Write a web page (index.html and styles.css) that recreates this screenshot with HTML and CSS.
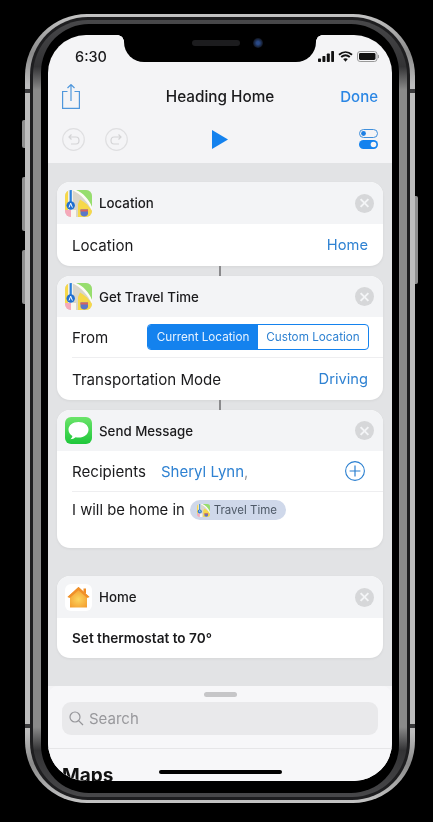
FILE: index.html
```html
<!DOCTYPE html>
<html lang="en">

<head>
    <meta charset="UTF-8">
    <meta name="viewport" content="width=device-width, initial-scale=1.0">
    <title>Heading Home</title>
    <link rel="stylesheet" href="styles.css">
</head>

<body>
    <svg class="defs" width="0" height="0">
        <defs>
            <linearGradient id="msgGreen" x1="0" y1="0" x2="0" y2="1">
                <stop offset="0" stop-color="#6be46a" />
                <stop offset="1" stop-color="#1ec73a" />
            </linearGradient>
            <radialGradient id="houseOrange" cx=".5" cy=".6" r=".55">
                <stop offset="0" stop-color="#fcd55e" />
                <stop offset="1" stop-color="#f39a2c" />
            </radialGradient>
            <clipPath id="mapClip">
                <rect width="27" height="27" rx="6" />
            </clipPath>
            <symbol id="mapIcon" viewBox="0 0 27 27">
                <g clip-path="url(#mapClip)">
                    <rect width="27" height="27" fill="#d9d6ca" />
                    <path d="M10 0H27V18C24 10 18 3 10 0Z" fill="#97de6e" />
                    <path d="M7 0H11C18 3 24 9 27 17V21C23 12 16 4 7 0Z" fill="#fdfcf6" />
                    <path d="M13 27V14L15 9.500C20 12 24 16 27 21V27Z" fill="#f6d84a" />
                    <rect width="3" height="20" fill="#f6d84a" />
                    <rect x="3" width="5" height="20" fill="#f4f1e6" />
                    <rect x="0" y="20" width="6" height="7" fill="#f5a9ba" />
                    <rect x="6" y="20" width="5" height="7" fill="#f8f6ef" />
                    <rect x="4.600" width="2.200" height="13" fill="#2a7fdc" />
                    <circle cx="5.700" cy="15.500" r="4.200" fill="#1f6fd0" />
                    <path d="M4 17.500 5.700 13.200 7.400 17.500" fill="none" stroke="#fff" stroke-width="1" />
                    <path d="M15.500 19.500H23V23.500C23 25.500 21 26.500 19.200 26.500 17.400 26.500 15.500 25.500 15.500 23.500Z" fill="#5b78c8" />
                    <rect x="15.500" y="19.500" width="7.500" height="2" fill="#d8625f" />
                </g>
            </symbol>
        </defs>
    </svg>

    <div class="phone">
        <span class="side-btn mute"></span>
        <span class="side-btn vol-up"></span>
        <span class="side-btn vol-down"></span>
        <span class="side-btn power"></span>
        <span class="band band-tl"></span>
        <span class="band band-tr"></span>
        <span class="band band-bl"></span>
        <span class="band band-br"></span>

        <div class="rim">
            <div class="ring">
                <div class="bezel">
                    <div class="screen">
                        <div class="notch">
                            <span class="speaker"></span>
                            <span class="camera"></span>
                        </div>

                        <header class="top">
                            <div class="status">
                                <span class="time">6:30</span>
                                <div class="status-icons">
                                    <svg width="16" height="11" viewBox="0 0 16 11">
                                        <rect x="0" y="7.500" width="3" height="3.500" rx=".7" fill="#111" />
                                        <rect x="4.400" y="5" width="3" height="6" rx=".7" fill="#111" />
                                        <rect x="8.800" y="2.500" width="3" height="8.500" rx=".7" fill="#111" />
                                        <rect x="13.200" y="0" width="2.800" height="11" rx=".7" fill="#111" />
                                    </svg>
                                    <svg width="15" height="11" viewBox="0 0 15 11">
                                        <path d="M1 3.800C5 .2 10 .2 14 3.800M3.200 6C5.800 3.800 9.200 3.800 11.800 6" fill="none" stroke="#111" stroke-width="1.900" />
                                        <path d="M5.200 8 7.500 10.800 9.800 8C8.400 6.900 6.600 6.900 5.200 8Z" fill="#111" />
                                    </svg>
                                    <svg width="22" height="11" viewBox="0 0 22 11">
                                        <rect x=".5" y=".5" width="19.500" height="10" rx="2.600" fill="none" stroke="#999" />
                                        <rect x="2" y="2" width="16.500" height="7" rx="1.400" fill="#111" />
                                        <rect x="20.800" y="3.800" width="1.200" height="3.400" rx=".6" fill="#999" />
                                    </svg>
                                </div>
                            </div>

                            <nav class="navbar">
                                <svg class="share" width="18" height="25" viewBox="0 0 18 25">
                                    <path d="M5.500 7.500H.6V24.400H17.400V7.500H12.500" fill="none" stroke="#4f97dc" stroke-width="1.200" />
                                    <path d="M9 17V.8M5.500 4 9 .6 12.500 4" fill="none" stroke="#4f97dc" stroke-width="1.200" />
                                </svg>
                                <h1 class="title">Heading Home</h1>
                                <span class="done">Done</span>
                            </nav>

                            <div class="toolbar">
                                <div class="history">
                                    <svg width="23" height="23" viewBox="0 0 23 23">
                                        <circle cx="11.500" cy="11.500" r="10.800" fill="none" stroke="#dfdfe1" stroke-width="1.200" />
                                        <path d="M7 9H14C18 9 18 16 14 16H9M9.500 6.500 7 9 9.500 11.500" fill="none" stroke="#d4d4d6" stroke-width="1.200" />
                                    </svg>
                                    <svg width="23" height="23" viewBox="0 0 23 23">
                                        <circle cx="11.500" cy="11.500" r="10.800" fill="none" stroke="#dfdfe1" stroke-width="1.200" />
                                        <path d="M16 9H9C5 9 5 16 9 16H14M13.500 6.500 16 9 13.500 11.500" fill="none" stroke="#d4d4d6" stroke-width="1.200" />
                                    </svg>
                                </div>
                                <svg class="play" width="16" height="19" viewBox="0 0 16 19">
                                    <path d="M0 0 16 9.500 0 19Z" fill="#1482ee" />
                                </svg>
                                <svg class="toggles" width="19" height="20" viewBox="0 0 19 20">
                                    <rect x=".5" y=".5" width="18" height="8" rx="4" fill="#f4f4f6" stroke="#3f8fdc" />
                                    <circle cx="4.500" cy="4.500" r="2.400" fill="#1c7fe4" />
                                    <rect y="11" width="19" height="9" rx="4.500" fill="#1482ee" />
                                    <circle cx="14.500" cy="15.500" r="2.800" fill="#f4f4f6" />
                                </svg>
                            </div>
                        </header>

                        <main class="canvas">
                            <section class="card">
                                <div class="card-head">
                                    <svg class="app-icon" width="27" height="27"><use href="#mapIcon" /></svg>
                                    <span class="card-title">Location</span>
                                    <span class="close"></span>
                                </div>
                                <div class="row">
                                    <span class="label">Location</span>
                                    <span class="value">Home</span>
                                </div>
                            </section>
                            <div class="link"></div>

                            <section class="card">
                                <div class="card-head head-short">
                                    <svg class="app-icon" width="27" height="27"><use href="#mapIcon" /></svg>
                                    <span class="card-title">Get Travel Time</span>
                                    <span class="close"></span>
                                </div>
                                <div class="row row-line row-from">
                                    <span class="label">From</span>
                                    <div class="segment">
                                        <span class="seg seg-on">Current Location</span>
                                        <span class="seg">Custom Location</span>
                                    </div>
                                </div>
                                <div class="row">
                                    <span class="label">Transportation Mode</span>
                                    <span class="value">Driving</span>
                                </div>
                            </section>
                            <div class="link"></div>

                            <section class="card">
                                <div class="card-head head-short">
                                    <svg class="app-icon" width="27" height="27" viewBox="0 0 27 27">
                                        <rect width="27" height="27" rx="6" fill="url(#msgGreen)" />
                                        <path d="M13.500 5C7.700 5 3.500 8.300 3.500 12.700 3.500 15.300 5 17.500 7.400 18.900 7.200 20.200 6.400 21.300 5.400 22.200 7.400 22.100 9.200 21.400 10.600 20.200 11.500 20.400 12.500 20.500 13.500 20.500 19.300 20.500 23.500 17.100 23.500 12.700 23.500 8.300 19.300 5 13.500 5Z" fill="#fff" />
                                    </svg>
                                    <span class="card-title">Send Message</span>
                                    <span class="close"></span>
                                </div>
                                <div class="row row-line recipients">
                                    <span class="label">Recipients</span>
                                    <span class="value to">Sheryl Lynn<span class="comma">,</span></span>
                                    <svg class="add" width="20" height="20" viewBox="0 0 20 20">
                                        <circle cx="10" cy="10" r="9.400" fill="none" stroke="#2a7fd0" stroke-width="1.100" />
                                        <path d="M10 4.600V15.400M4.600 10H15.400" stroke="#2a7fd0" stroke-width="1.200" />
                                    </svg>
                                </div>
                                <div class="message">
                                    <span class="label">I will be home in</span>
                                    <span class="pill">
                                        <svg width="13" height="13"><use href="#mapIcon" /></svg>
                                        Travel Time
                                    </span>
                                </div>
                            </section>

                            <section class="card card-home">
                                <div class="card-head">
                                    <svg class="app-icon" width="27" height="27" viewBox="0 0 27 27">
                                        <rect width="27" height="27" rx="6" fill="#fff" />
                                        <rect x="18.500" y="4.500" width="2.500" height="5" fill="#f08c24" />
                                        <path d="M13.500 3 24.500 13 22 13.800V23.500H5V13.800L2.500 13Z" fill="url(#houseOrange)" />
                                        <path d="M13.500 3 24.500 13 22 13.800 13.500 6.200 5 13.800 2.500 13Z" fill="#f0902a" />
                                    </svg>
                                    <span class="card-title">Home</span>
                                    <span class="close"></span>
                                </div>
                                <div class="row row-setting">
                                    <span class="setting">Set thermostat to 70°</span>
                                </div>
                            </section>
                        </main>

                        <div class="sheet">
                            <span class="grabber"></span>
                            <div class="search">
                                <svg width="15" height="15" viewBox="0 0 15 15">
                                    <circle cx="6" cy="6" r="5" fill="none" stroke="#96969a" stroke-width="1.200" />
                                    <path d="M9.600 9.600 14 14" stroke="#96969a" stroke-width="1.300" />
                                </svg>
                                <span>Search</span>
                            </div>
                            <h2 class="sheet-title">Maps</h2>
                        </div>
                        <span class="home-bar"></span>
                    </div>
                </div>
            </div>
        </div>
    </div>
</body>

</html>
```

FILE: styles.css
```css
* {
    padding: 0;
    margin: 0;
    box-sizing: border-box;
}

body {
    width: 433px;
    height: 822px;
    overflow: hidden;
    background: #000;
    font-family: Inter, "Noto Sans", sans-serif;
    color: #1a1a1c;
}

.defs {
    position: absolute;
}

/* phone frame */
.phone {
    position: relative;
    width: 390px;
    height: 789px;
    margin: 14px 0 0 25px;
    padding: 3px 5px;
    border-radius: 62px;
    background: linear-gradient(#c4c4c4, #8a8a8a 5%, #bdbdbd 9%, #bdbdbd 91%, #8a8a8a 95%, #c4c4c4);
    filter: blur(.35px);
}

.rim {
    height: 100%;
    padding: 3px;
    border-radius: 58px;
    background: #1e1e20;
}

.ring {
    height: 100%;
    padding: 4px 8px;
    border-radius: 55px;
    background: linear-gradient(#48484a, #333335 6%, #8a8a8a 9%, #8a8a8a 91%, #333335 94%, #48484a);
}

.bezel {
    height: 100%;
    padding: 11px 7px 12px;
    border-radius: 48px;
    background: #000;
}

.side-btn {
    position: absolute;
    width: 3px;
    background: #8f8f8f;
    border-radius: 2px 0 0 2px;
}

.mute {
    left: -3px;
    top: 106px;
    height: 28px;
}

.vol-up {
    left: -3px;
    top: 163px;
    height: 54px;
}

.vol-down {
    left: -3px;
    top: 236px;
    height: 54px;
}

.power {
    right: -3px;
    top: 182px;
    height: 88px;
    border-radius: 0 2px 2px 0;
}

.band {
    position: absolute;
    z-index: 2;
    width: 5px;
    height: 4px;
    background: #3a3a3c;
}

.band-tl {
    left: 0;
    top: 75px;
}

.band-tr {
    right: 0;
    top: 75px;
}

.band-bl {
    left: 0;
    top: 710px;
}

.band-br {
    right: 0;
    top: 710px;
}

.screen {
    position: relative;
    display: flex;
    flex-direction: column;
    height: 100%;
    overflow: hidden;
    border-radius: 38px;
    background: #f4f4f6;
}

.notch {
    position: absolute;
    left: 76px;
    top: 0;
    z-index: 3;
    display: flex;
    align-items: center;
    justify-content: center;
    gap: 13px;
    width: 192px;
    height: 27px;
    padding: 0 0 12px 14px;
    background: #000;
    border-radius: 0 0 20px 20px;
}

/* little flares where the notch meets the top edge */
.notch::before,
.notch::after {
    content: "";
    position: absolute;
    top: 0;
    width: 6px;
    height: 6px;
}

.notch::before {
    left: -6px;
    background: radial-gradient(circle at 0 100%, transparent 5.500px, #000 6px);
}

.notch::after {
    right: -6px;
    background: radial-gradient(circle at 100% 100%, transparent 5.500px, #000 6px);
}

.speaker {
    width: 48px;
    height: 6px;
    border-radius: 3px;
    background: #1c1c1e;
}

.camera {
    width: 10px;
    height: 10px;
    border-radius: 50%;
    background: radial-gradient(#2a4a88 20%, #10141e 70%);
}

/* header */
.top {
    flex: none;
    height: 128px;
}

.status {
    display: flex;
    align-items: center;
    justify-content: space-between;
    height: 42px;
    padding: 0 13px 0 27px;
}

.time {
    font-size: 14.500px;
    font-weight: 500;
}

.status-icons {
    display: flex;
    align-items: center;
    gap: 4px;
}

.navbar {
    display: grid;
    grid-template-columns: 1fr auto 1fr;
    align-items: center;
    height: 38px;
    padding: 0 14px;
}

.title {
    font-size: 15.300px;
    font-weight: 500;
    color: #1a1a1c;
}

.done {
    justify-self: end;
    font-size: 15px;
    font-weight: 500;
    color: #2a86e4;
}

.toolbar {
    display: grid;
    grid-template-columns: 1fr auto 1fr;
    align-items: center;
    height: 48px;
    padding: 0 14px;
}

.history {
    display: flex;
    gap: 20px;
}

.play {
    margin-top: 1px;
}

.toggles {
    justify-self: end;
}

/* shortcut cards */
.canvas {
    flex: none;
    height: 523px;
    padding: 19px 9px 0;
    background: #e2e3e5;
}

.card {
    overflow: hidden;
    border-radius: 13px;
    background: #fff;
    box-shadow: 0 1px 3px rgba(0, 0, 0, .06);
}

.card-home {
    margin-top: 28px;
}

.card-head {
    display: flex;
    align-items: center;
    height: 42px;
    padding: 0 9px 0 8px;
    background: #f3f4f6;
}

.head-short {
    height: 41px;
}

.app-icon {
    flex: none;
    margin-right: 7px;
}

.card-title {
    font-size: 13.300px;
    font-weight: 500;
}

.setting {
    font-size: 13.600px;
    font-weight: 600;
}

.close {
    position: relative;
    width: 19px;
    height: 19px;
    margin-left: auto;
    border-radius: 50%;
    background: #d6d7d9;
}

.close::before,
.close::after {
    content: "";
    position: absolute;
    left: 4px;
    top: 8.500px;
    width: 11px;
    height: 2px;
    background: #f3f4f6;
    transform: rotate(45deg);
}

.close::after {
    transform: rotate(-45deg);
}

.row {
    display: flex;
    align-items: center;
    justify-content: space-between;
    height: 42px;
    margin-left: 15px;
    padding-right: 15px;
}

.row-from {
    height: 41px;
    padding-right: 14px;
}

.row-setting {
    height: 40px;
}

.row-line {
    border-bottom: 1px solid #eeeef0;
}

.label {
    font-size: 15.100px;
}

.value {
    font-size: 14.700px;
    color: #2f82d2;
}

.segment {
    display: flex;
    width: 222px;
    height: 26px;
    overflow: hidden;
    border: 1px solid #1482ee;
    border-radius: 4px;
}

.seg {
    flex: 1;
    font-size: 11.700px;
    line-height: 24px;
    text-align: center;
    color: #2f82d2;
}

.seg-on {
    background: #1482ee;
    color: #e6f2ff;
}

.recipients {
    justify-content: flex-start;
    height: 41px;
    padding-right: 18px;
}

.to {
    margin-left: 15px;
    font-size: 15px;
}

.comma {
    color: #9a9a9e;
}

.add {
    margin-left: auto;
}

.message {
    display: flex;
    align-items: center;
    gap: 5px;
    height: 56px;
    margin-left: 15px;
    padding-bottom: 20px;
}

.message .label {
    font-size: 14.800px;
}

.pill {
    display: flex;
    align-items: center;
    gap: 4px;
    height: 20px;
    padding: 0 9px 0 7px;
    border-radius: 10px;
    background: #cfd8ea;
    font-size: 11.500px;
    color: #4e5967;
}

.link {
    width: 2px;
    height: 10px;
    margin: 0 auto;
    background: #8a8a8c;
}

/* bottom sheet */
.sheet {
    flex: 1;
    position: relative;
    min-height: 0;
    padding: 6px 14px 0;
    border-radius: 10px 10px 0 0;
    background: #f7f7f9;
}

.grabber {
    display: block;
    width: 33px;
    height: 5px;
    margin: 0 auto 5px;
    border-radius: 3px;
    background: #c6c6c8;
}

.search {
    display: flex;
    align-items: center;
    gap: 5px;
    height: 33px;
    padding-left: 7px;
    border-radius: 9px;
    background: #e9e9eb;
    font-size: 15px;
    color: #98989c;
}

.sheet-title {
    margin: 13px -14px 0;
    padding: 15px 14px 0;
    border-top: 1px solid #e6e6e8;
    font-size: 19px;
    font-weight: 700;
    line-height: 24px;
    color: #111;
}

.home-bar {
    position: absolute;
    left: 111px;
    bottom: 7px;
    width: 123px;
    height: 4px;
    border-radius: 2px;
    background: #000;
}
```
